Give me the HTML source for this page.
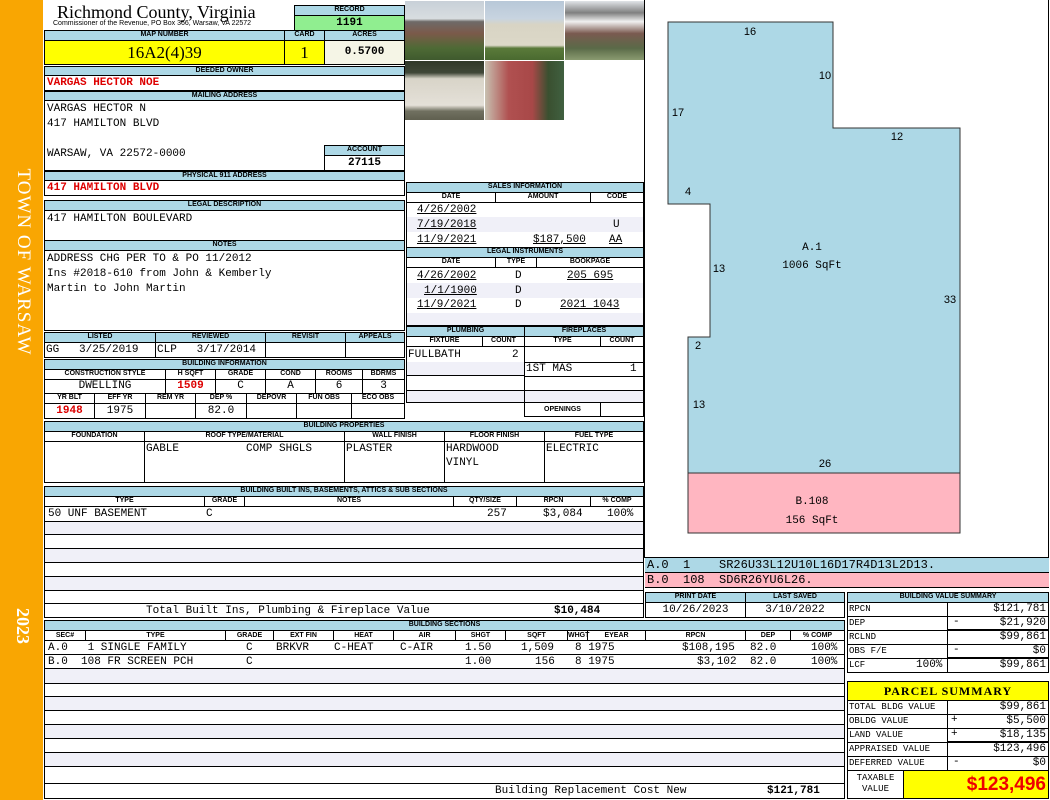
<!DOCTYPE html><html><head><style>
*{margin:0;padding:0;box-sizing:border-box}
body{width:1050px;height:800px;position:relative;background:#fff;overflow:hidden;font-family:"Liberation Mono",monospace;font-size:11px;color:#000}
div{position:absolute}
.h{background:#add8e6;border:1px solid #000;font:bold 7px "Liberation Sans",sans-serif;text-align:center;line-height:8px;white-space:nowrap;overflow:hidden}
.c{border:1px solid #000;white-space:nowrap;overflow:hidden}
.t{white-space:nowrap;line-height:14px}
.r{color:#d00;font-weight:bold}
.ctr{text-align:center}.rt{text-align:right}
.ln{border-top:1px solid #000;height:0}
.alt{background:#f0f0f8}
</style></head><body>
<div style="left:0;top:0;width:43px;height:800px;background:#f9a602"></div>
<div style="left:-90px;top:250px;width:224px;height:24px;transform:rotate(90deg);color:#fff;font:19px 'Liberation Serif',serif;text-align:center;letter-spacing:1px">TOWN OF WARSAW</div>
<div style="left:-10px;top:615px;width:64px;height:22px;transform:rotate(90deg);color:#fff;font:bold 18px 'Liberation Serif',serif;text-align:center">2023</div>

<div style="left:57px;top:2px;font:18px 'Liberation Serif',serif;line-height:20px">Richmond County, Virginia</div>
<div style="left:53px;top:20px;font:7px 'Liberation Sans',sans-serif">Commissioner of the Revenue, PO Box 366, Warsaw, VA 22572</div>
<div class="h" style="left:294px;top:5px;width:111px;height:11px">RECORD</div>
<div class="c ctr" style="left:294px;top:15px;width:111px;height:16px;background:#90ee90;font-weight:bold;line-height:14px">1191</div>

<div class="h" style="left:44px;top:30px;width:241px;height:11px">MAP NUMBER</div>
<div class="h" style="left:284px;top:30px;width:41px;height:11px">CARD</div>
<div class="h" style="left:324px;top:30px;width:81px;height:11px">ACRES</div>
<div class="c ctr" style="left:44px;top:40px;width:241px;height:25px;background:#ff0;font:17px 'Liberation Serif',serif;line-height:24px">16A2(4)39</div>
<div class="c ctr" style="left:284px;top:40px;width:41px;height:25px;background:#ff0;font:17px 'Liberation Serif',serif;line-height:24px">1</div>
<div class="c ctr" style="left:324px;top:40px;width:81px;height:25px;background:#f5f5e6;font-weight:bold;line-height:23px">0.5700</div>

<div class="h" style="left:44px;top:66px;width:361px;height:10px">DEEDED OWNER</div>
<div class="c" style="left:44px;top:75px;width:361px;height:16px"><div class="t r" style="left:2px;top:0">VARGAS HECTOR NOE</div></div>
<div class="h" style="left:44px;top:91px;width:361px;height:10px">MAILING ADDRESS</div>
<div class="c" style="left:44px;top:100px;width:361px;height:71px">
<div class="t" style="left:2px;top:1px">VARGAS HECTOR N</div>
<div class="t" style="left:2px;top:16px">417 HAMILTON BLVD</div>
<div class="t" style="left:2px;top:46px">WARSAW, VA 22572-0000</div></div>
<div class="h" style="left:324px;top:145px;width:81px;height:11px">ACCOUNT</div>
<div class="c ctr" style="left:324px;top:155px;width:81px;height:16px;font-weight:bold;line-height:14px">27115</div>
<div class="h" style="left:44px;top:171px;width:361px;height:10px">PHYSICAL 911 ADDRESS</div>
<div class="c" style="left:44px;top:180px;width:361px;height:16px"><div class="t r" style="left:2px;top:0">417 HAMILTON BLVD</div></div>

<div class="h" style="left:44px;top:200px;width:361px;height:11px">LEGAL DESCRIPTION</div>
<div class="c" style="left:44px;top:210px;width:361px;height:31px"><div class="t" style="left:2px;top:1px">417 HAMILTON BOULEVARD</div></div>
<div class="h" style="left:44px;top:240px;width:361px;height:11px">NOTES</div>
<div class="c" style="left:44px;top:250px;width:361px;height:81px">
<div class="t" style="left:2px;top:1px">ADDRESS CHG PER TO &amp; PO 11/2012</div>
<div class="t" style="left:2px;top:16px">Ins #2018-610 from John &amp; Kemberly</div>
<div class="t" style="left:2px;top:31px">Martin to John Martin</div></div>

<div class="h" style="left:44px;top:332px;width:112px;height:11px">LISTED</div>
<div class="h" style="left:155px;top:332px;width:111px;height:11px">REVIEWED</div>
<div class="h" style="left:265px;top:332px;width:81px;height:11px">REVISIT</div>
<div class="h" style="left:345px;top:332px;width:60px;height:11px">APPEALS</div>
<div class="c" style="left:44px;top:342px;width:112px;height:16px"><div class="t" style="left:1px;top:0">GG &nbsp;&nbsp;3/25/2019</div></div>
<div class="c" style="left:155px;top:342px;width:111px;height:16px"><div class="t" style="left:1px;top:0">CLP &nbsp;&nbsp;3/17/2014</div></div>
<div class="c" style="left:265px;top:342px;width:81px;height:16px"></div>
<div class="c" style="left:345px;top:342px;width:60px;height:16px"></div>

<div class="h" style="left:44px;top:359px;width:361px;height:11px">BUILDING INFORMATION</div>
<div class="h" style="left:44px;top:369px;width:122px;height:11px;background:#fff">CONSTRUCTION STYLE</div>
<div class="h" style="left:165px;top:369px;width:51px;height:11px;background:#fff">H SQFT</div>
<div class="h" style="left:215px;top:369px;width:51px;height:11px;background:#fff">GRADE</div>
<div class="h" style="left:265px;top:369px;width:51px;height:11px;background:#fff">COND</div>
<div class="h" style="left:315px;top:369px;width:48px;height:11px;background:#fff">ROOMS</div>
<div class="h" style="left:362px;top:369px;width:43px;height:11px;background:#fff">BDRMS</div>
<div class="c ctr" style="left:44px;top:379px;width:122px;height:15px;line-height:13px">DWELLING</div>
<div class="c ctr r" style="left:165px;top:379px;width:51px;height:15px;line-height:13px">1509</div>
<div class="c ctr" style="left:215px;top:379px;width:51px;height:15px;line-height:13px">C</div>
<div class="c ctr" style="left:265px;top:379px;width:51px;height:15px;line-height:13px">A</div>
<div class="c ctr" style="left:315px;top:379px;width:48px;height:15px;line-height:13px">6</div>
<div class="c ctr" style="left:362px;top:379px;width:43px;height:15px;line-height:13px">3</div>
<div class="h" style="left:44px;top:393px;width:51px;height:11px;background:#fff">YR BLT</div>
<div class="h" style="left:94px;top:393px;width:52px;height:11px;background:#fff">EFF YR</div>
<div class="h" style="left:145px;top:393px;width:51px;height:11px;background:#fff">REM YR</div>
<div class="h" style="left:195px;top:393px;width:52px;height:11px;background:#fff">DEP %</div>
<div class="h" style="left:246px;top:393px;width:51px;height:11px;background:#fff">DEPOVR</div>
<div class="h" style="left:296px;top:393px;width:56px;height:11px;background:#fff">FUN OBS</div>
<div class="h" style="left:351px;top:393px;width:54px;height:11px;background:#fff">ECO OBS</div>
<div class="c ctr r" style="left:44px;top:403px;width:51px;height:16px;line-height:14px">1948</div>
<div class="c ctr" style="left:94px;top:403px;width:52px;height:16px;line-height:14px">1975</div>
<div class="c" style="left:145px;top:403px;width:51px;height:16px"></div>
<div class="c ctr" style="left:195px;top:403px;width:52px;height:16px;line-height:14px">82.0</div>
<div class="c" style="left:246px;top:403px;width:51px;height:16px"></div>
<div class="c" style="left:296px;top:403px;width:56px;height:16px"></div>
<div class="c" style="left:351px;top:403px;width:54px;height:16px"></div>

<!-- photos -->
<div style="left:405px;top:1px;width:79px;height:59px;background:linear-gradient(#c8d0d8 0,#d8dde0 30%,#6e6a68 35%,#7b5a4a 55%,#4e6a35 80%,#3f5a2e 100%)"></div>
<div style="left:485px;top:1px;width:79px;height:59px;background:linear-gradient(#b8c8d8 0,#c8d4e0 30%,#d8d4c4 40%,#dcd8c8 75%,#5a7a3a 80%,#4a6a30 100%)"></div>
<div style="left:565px;top:1px;width:79px;height:59px;background:linear-gradient(#e0e4e8 0,#808080 20%,#f0f0f0 35%,#7a5a50 55%,#5a6a48 80%,#8a9a70 100%)"></div>
<div style="left:405px;top:61px;width:79px;height:59px;background:linear-gradient(#303828 0,#404838 20%,#d8d4c8 30%,#e4e0d8 75%,#707060 85%,#606050 100%)"></div>
<div style="left:485px;top:61px;width:79px;height:59px;background:linear-gradient(90deg,#c8c0b0 0,#b05050 30%,#a84848 60%,#3a5030 80%,#406040 100%)"></div>

<!-- sales -->
<div class="h" style="left:406px;top:182px;width:238px;height:11px">SALES INFORMATION</div>
<div class="h" style="left:406px;top:192px;width:90px;height:11px;background:#fff">DATE</div>
<div class="h" style="left:495px;top:192px;width:96px;height:11px;background:#fff">AMOUNT</div>
<div class="h" style="left:590px;top:192px;width:54px;height:11px;background:#fff">CODE</div>
<div class="c" style="left:406px;top:202px;width:238px;height:46px">
<div class="t" style="left:10px;top:0;text-decoration:underline">4/26/2002</div>
<div class="t alt" style="left:0;top:14px;width:236px;height:15px"></div>
<div class="t" style="left:10px;top:15px;text-decoration:underline">7/19/2018</div><div class="t" style="left:206px;top:15px">U</div>
<div class="t" style="left:10px;top:30px;text-decoration:underline">11/9/2021</div><div class="t" style="left:126px;top:30px;text-decoration:underline">$187,500</div><div class="t" style="left:202px;top:30px;text-decoration:underline">AA</div></div>
<div class="h" style="left:406px;top:247px;width:238px;height:11px">LEGAL INSTRUMENTS</div>
<div class="h" style="left:406px;top:257px;width:90px;height:11px;background:#fff">DATE</div>
<div class="h" style="left:495px;top:257px;width:42px;height:11px;background:#fff">TYPE</div>
<div class="h" style="left:536px;top:257px;width:108px;height:11px;background:#fff">BOOKPAGE</div>
<div class="c" style="left:406px;top:267px;width:238px;height:59px">
<div class="alt" style="left:0;top:15px;width:236px;height:15px"></div>
<div class="alt" style="left:0;top:45px;width:236px;height:13px"></div>
<div class="t" style="left:10px;top:1px;text-decoration:underline">4/26/2002</div><div class="t" style="left:108px;top:1px">D</div><div class="t" style="left:160px;top:1px;text-decoration:underline">205 695</div>
<div class="t" style="left:17px;top:16px;text-decoration:underline">1/1/1900</div><div class="t" style="left:108px;top:16px">D</div>
<div class="t" style="left:10px;top:30px;text-decoration:underline">11/9/2021</div><div class="t" style="left:108px;top:30px">D</div><div class="t" style="left:153px;top:30px;text-decoration:underline">2021 1043</div></div>

<div class="h" style="left:406px;top:326px;width:119px;height:11px">PLUMBING</div>
<div class="h" style="left:524px;top:326px;width:120px;height:11px">FIREPLACES</div>
<div class="h" style="left:406px;top:336px;width:77px;height:11px;background:#fff">FIXTURE</div>
<div class="h" style="left:482px;top:336px;width:43px;height:11px;background:#fff">COUNT</div>
<div class="h" style="left:524px;top:336px;width:77px;height:11px;background:#fff">TYPE</div>
<div class="h" style="left:600px;top:336px;width:44px;height:11px;background:#fff">COUNT</div>
<div class="c" style="left:406px;top:346px;width:119px;height:57px">
<div class="alt" style="left:0;top:15px;width:117px;height:14px;border-bottom:1px solid #000"></div>
<div class="alt" style="left:0;top:43px;width:117px;height:14px;border-top:1px solid #000"></div>
<div class="t" style="left:1px;top:1px">FULLBATH</div><div class="t" style="left:105px;top:1px">2</div></div>
<div class="c" style="left:524px;top:346px;width:120px;height:57px">
<div class="ln" style="left:0;top:15px;width:118px"></div>
<div class="ln" style="left:0;top:29px;width:118px"></div>
<div class="alt" style="left:0;top:43px;width:118px;height:13px;border-top:1px solid #000"></div>
<div class="t" style="left:1px;top:15px">1ST MAS</div><div class="t" style="left:105px;top:15px">1</div></div>
<div class="c" style="left:524px;top:402px;width:77px;height:15px;font:bold 7px 'Liberation Sans',sans-serif;text-align:center;line-height:13px">OPENINGS</div>
<div class="c" style="left:600px;top:402px;width:44px;height:15px"></div>

<!-- building properties -->
<div class="h" style="left:44px;top:421px;width:600px;height:11px">BUILDING PROPERTIES</div>
<div class="h" style="left:44px;top:431px;width:101px;height:11px;background:#fff">FOUNDATION</div>
<div class="h" style="left:144px;top:431px;width:201px;height:11px;background:#fff">ROOF TYPE/MATERIAL</div>
<div class="h" style="left:344px;top:431px;width:101px;height:11px;background:#fff">WALL FINISH</div>
<div class="h" style="left:444px;top:431px;width:101px;height:11px;background:#fff">FLOOR FINISH</div>
<div class="h" style="left:544px;top:431px;width:100px;height:11px;background:#fff">FUEL TYPE</div>
<div class="c" style="left:44px;top:441px;width:101px;height:42px"></div>
<div class="c" style="left:144px;top:441px;width:201px;height:42px"><div class="t" style="left:1px;top:0">GABLE</div><div class="t" style="left:101px;top:0">COMP SHGLS</div></div>
<div class="c" style="left:344px;top:441px;width:101px;height:42px"><div class="t" style="left:1px;top:0">PLASTER</div></div>
<div class="c" style="left:444px;top:441px;width:101px;height:42px"><div class="t" style="left:1px;top:0">HARDWOOD</div><div class="t" style="left:1px;top:14px">VINYL</div></div>
<div class="c" style="left:544px;top:441px;width:100px;height:42px"><div class="t" style="left:1px;top:0">ELECTRIC</div></div>

<!-- built ins -->
<div class="h" style="left:44px;top:486px;width:600px;height:11px">BUILDING BUILT INS, BASEMENTS, ATTICS &amp; SUB SECTIONS</div>
<div class="h" style="left:44px;top:496px;width:161px;height:11px;background:#fff">TYPE</div>
<div class="h" style="left:204px;top:496px;width:41px;height:11px;background:#fff">GRADE</div>
<div class="h" style="left:244px;top:496px;width:210px;height:11px;background:#fff">NOTES</div>
<div class="h" style="left:453px;top:496px;width:64px;height:11px;background:#fff">QTY/SIZE</div>
<div class="h" style="left:516px;top:496px;width:75px;height:11px;background:#fff">RPCN</div>
<div class="h" style="left:590px;top:496px;width:54px;height:11px;background:#fff">% COMP</div>
<div class="c" style="left:44px;top:506px;width:600px;height:112px">
<div class="t" style="left:3px;top:0">50 UNF BASEMENT</div><div class="t" style="left:161px;top:0">C</div>
<div class="t" style="left:442px;top:0">257</div><div class="t" style="left:498px;top:0">$3,084</div><div class="t" style="left:562px;top:0">100%</div>
<div class="alt" style="left:0;top:14px;width:598px;height:13px;border-top:1px solid #000"></div>
<div class="ln" style="left:0;top:27px;width:598px"></div>
<div class="alt" style="left:0;top:41px;width:598px;height:14px;border-top:1px solid #000"></div>
<div class="ln" style="left:0;top:55px;width:598px"></div>
<div class="alt" style="left:0;top:69px;width:598px;height:14px;border-top:1px solid #000"></div>
<div class="ln" style="left:0;top:83px;width:598px"></div>
<div class="ln" style="left:0;top:96px;width:598px"></div>
<div class="t" style="left:101px;top:97px">Total Built Ins, Plumbing &amp; Fireplace Value</div>
<div class="t" style="left:509px;top:97px;font-weight:bold">$10,484</div></div>

<!-- print date -->
<div class="h" style="left:645px;top:592px;width:101px;height:11px">PRINT DATE</div>
<div class="h" style="left:745px;top:592px;width:100px;height:11px">LAST SAVED</div>
<div class="c ctr" style="left:645px;top:602px;width:101px;height:16px;line-height:14px">10/26/2023</div>
<div class="c ctr" style="left:745px;top:602px;width:100px;height:16px;line-height:14px">3/10/2022</div>

<!-- building sections -->
<div class="h" style="left:44px;top:620px;width:801px;height:11px">BUILDING SECTIONS</div>
<div style="left:44px;top:630px;width:801px;height:11px;border:1px solid #000;font:bold 7px 'Liberation Sans',sans-serif;line-height:9px">
<div style="left:0;width:41px;text-align:center;border-right:1px solid #000;height:9px">SEC#</div>
<div style="left:41px;width:140px;text-align:center;border-right:1px solid #000;height:9px">TYPE</div>
<div style="left:181px;width:48px;text-align:center;border-right:1px solid #000;height:9px">GRADE</div>
<div style="left:229px;width:60px;text-align:center;border-right:1px solid #000;height:9px">EXT FIN</div>
<div style="left:289px;width:60px;text-align:center;border-right:1px solid #000;height:9px">HEAT</div>
<div style="left:349px;width:62px;text-align:center;border-right:1px solid #000;height:9px">AIR</div>
<div style="left:411px;width:50px;text-align:center;border-right:1px solid #000;height:9px">SHGT</div>
<div style="left:461px;width:62px;text-align:center;border-right:1px solid #000;height:9px">SQFT</div>
<div style="left:523px;width:20px;text-align:center;border-right:1px solid #000;height:9px">WHGT</div>
<div style="left:543px;width:58px;text-align:center;border-right:1px solid #000;height:9px">EYEAR</div>
<div style="left:601px;width:100px;text-align:center;border-right:1px solid #000;height:9px">RPCN</div>
<div style="left:701px;width:45px;text-align:center;border-right:1px solid #000;height:9px">DEP</div>
<div style="left:746px;width:53px;text-align:center">% COMP</div></div>
<div class="c" style="left:44px;top:640px;width:801px;height:159px">
<div class="t" style="left:3px;top:0">A.0 &nbsp;&nbsp;1 SINGLE FAMILY</div><div class="t" style="left:201px;top:0">C</div><div class="t" style="left:231px;top:0">BRKVR</div><div class="t" style="left:289px;top:0">C-HEAT</div><div class="t" style="left:355px;top:0">C-AIR</div>
<div class="t" style="left:420px;top:0">1.50</div><div class="t" style="left:476px;top:0">1,509</div><div class="t" style="left:530px;top:0">8 1975</div><div class="t" style="left:637px;top:0">$108,195</div><div class="t" style="left:705px;top:0">82.0</div><div class="t" style="left:766px;top:0">100%</div>
<div class="ln" style="left:0;top:13px;width:799px"></div>
<div class="t" style="left:3px;top:14px">B.0 &nbsp;108 FR SCREEN PCH</div><div class="t" style="left:201px;top:14px">C</div>
<div class="t" style="left:420px;top:14px">1.00</div><div class="t" style="left:490px;top:14px">156</div><div class="t" style="left:530px;top:14px">8 1975</div><div class="t" style="left:652px;top:14px">$3,102</div><div class="t" style="left:705px;top:14px">82.0</div><div class="t" style="left:766px;top:14px">100%</div>
<div class="alt" style="left:0;top:27px;width:799px;height:15px;border-top:1px solid #000"></div>
<div class="ln" style="left:0;top:42px;width:799px"></div>
<div class="alt" style="left:0;top:55px;width:799px;height:14px;border-top:1px solid #000"></div>
<div class="ln" style="left:0;top:69px;width:799px"></div>
<div class="alt" style="left:0;top:83px;width:799px;height:14px;border-top:1px solid #000"></div>
<div class="ln" style="left:0;top:97px;width:799px"></div>
<div class="alt" style="left:0;top:111px;width:799px;height:14px;border-top:1px solid #000"></div>
<div class="ln" style="left:0;top:125px;width:799px"></div>
<div class="ln" style="left:0;top:142px;width:799px"></div>
<div class="t" style="left:450px;top:143px">Building Replacement Cost New</div>
<div class="t" style="left:722px;top:143px;font-weight:bold">$121,781</div></div>

<!-- sketch -->
<div style="left:644px;top:0;width:405px;height:558px;border-left:1px solid #000;border-right:1px solid #000;border-bottom:1px solid #000"></div>
<svg style="position:absolute;left:0;top:0" width="1050" height="560">
<polygon points="668,22 833,22 833,128 960,128 960,473 688,473 688,337 710,337 710,204 668,204" fill="#add8e6" stroke="#333" stroke-width="1"/>
<rect x="688" y="473" width="272" height="60" fill="#ffb6c1" stroke="#333"/>
<g font-family="Liberation Sans,sans-serif" font-size="11" text-anchor="middle">
<text x="750" y="35">16</text><text x="825" y="79">10</text><text x="678" y="116">17</text><text x="897" y="140">12</text>
<text x="688" y="195">4</text><text x="719" y="272">13</text><text x="950" y="303">33</text><text x="698" y="349">2</text>
<text x="699" y="408">13</text><text x="825" y="467">26</text></g>
<g font-family="Liberation Mono,monospace" font-size="11" text-anchor="middle">
<text x="812" y="250">A.1</text><text x="812" y="268">1006 SqFt</text>
<text x="812" y="504">B.108</text><text x="812" y="523">156 SqFt</text></g>
</svg>
<div style="left:645px;top:558px;width:404px;height:15px;background:#add8e6;border-bottom:1px solid #000"><div class="t" style="left:2px;top:0;font-size:12px">A.0 &nbsp;1 &nbsp;&nbsp;&nbsp;SR26U33L12U10L16D17R4D13L2D13.</div></div>
<div style="left:645px;top:573px;width:404px;height:15px;background:#ffb6c1;border-bottom:1px solid #000"><div class="t" style="left:2px;top:0;font-size:12px">B.0 &nbsp;108 &nbsp;SD6R26YU6L26.</div></div>

<!-- value summary -->
<div class="h" style="left:847px;top:592px;width:202px;height:11px">BUILDING VALUE SUMMARY</div>
<div style="left:847px;top:602px;width:202px;height:71px;border:1px solid #000;font-size:9px">
<div class="c" style="left:-1px;top:-1px;width:101px;height:15px;line-height:13px;padding-left:1px">RPCN</div><div class="c rt" style="left:99px;top:-1px;width:102px;height:15px;line-height:13px;font-size:11px;padding-right:2px">$121,781</div>
<div class="c" style="left:-1px;top:13px;width:101px;height:15px;line-height:13px;padding-left:1px">DEP</div><div class="c rt" style="left:99px;top:13px;width:102px;height:15px;line-height:13px;font-size:11px;padding-right:2px;border-bottom:2px solid #000">$21,920</div><div class="t" style="left:105px;top:13px;line-height:13px;font-size:11px">-</div>
<div class="c" style="left:-1px;top:27px;width:101px;height:15px;line-height:13px;padding-left:1px">RCLND</div><div class="c rt" style="left:99px;top:27px;width:102px;height:15px;line-height:13px;font-size:11px;padding-right:2px">$99,861</div>
<div class="c" style="left:-1px;top:41px;width:101px;height:15px;line-height:13px;padding-left:1px">OBS F/E</div><div class="c rt" style="left:99px;top:41px;width:102px;height:15px;line-height:13px;font-size:11px;padding-right:2px;border-bottom:2px solid #000">$0</div><div class="t" style="left:105px;top:41px;line-height:13px;font-size:11px">-</div>
<div class="c" style="left:-1px;top:55px;width:101px;height:15px;line-height:13px;padding-left:1px">LCF<span style="position:absolute;left:68px;font-size:11px">100%</span></div><div class="c rt" style="left:99px;top:55px;width:102px;height:15px;line-height:13px;font-size:11px;padding-right:2px">$99,861</div>
</div>

<!-- parcel summary -->
<div class="c ctr" style="left:847px;top:681px;width:202px;height:20px;background:#ff0;font:bold 12px 'Liberation Serif',serif;line-height:18px;letter-spacing:1px">PARCEL SUMMARY</div>
<div style="left:847px;top:700px;width:202px;height:99px;border:1px solid #000;font-size:9px">
<div class="c" style="left:-1px;top:-1px;width:57px;height:15px;line-height:13px;padding-left:1px;width:57px;border:none"></div>
<div class="c" style="left:-1px;top:-1px;width:57px;height:15px;border:none"></div>
<div class="c" style="left:-1px;top:-1px;width:57px;height:15px;border:none"></div>
<div class="c" style="left:-1px;top:-1px;width:57px;height:15px;border:none"></div>
<div class="c" style="left:-1px;top:-1px;width:101px;height:15px;line-height:13px;padding-left:1px">TOTAL BLDG VALUE</div><div class="c rt" style="left:99px;top:-1px;width:102px;height:15px;line-height:13px;font-size:11px;padding-right:2px">$99,861</div>
<div class="c" style="left:-1px;top:13px;width:101px;height:15px;line-height:13px;padding-left:1px">OBLDG VALUE</div><div class="c rt" style="left:99px;top:13px;width:102px;height:15px;line-height:13px;font-size:11px;padding-right:2px">$5,500</div><div class="t" style="left:103px;top:13px;line-height:13px;font-size:11px">+</div>
<div class="c" style="left:-1px;top:27px;width:101px;height:15px;line-height:13px;padding-left:1px">LAND VALUE</div><div class="c rt" style="left:99px;top:27px;width:102px;height:15px;line-height:13px;font-size:11px;padding-right:2px;border-bottom:2px solid #000">$18,135</div><div class="t" style="left:103px;top:27px;line-height:13px;font-size:11px">+</div>
<div class="c" style="left:-1px;top:41px;width:101px;height:15px;line-height:13px;padding-left:1px">APPRAISED VALUE</div><div class="c rt" style="left:99px;top:41px;width:102px;height:15px;line-height:13px;font-size:11px;padding-right:2px">$123,496</div>
<div class="c" style="left:-1px;top:55px;width:101px;height:15px;line-height:13px;padding-left:1px">DEFERRED VALUE</div><div class="c rt" style="left:99px;top:55px;width:102px;height:15px;line-height:13px;font-size:11px;padding-right:2px">$0</div><div class="t" style="left:105px;top:55px;line-height:13px;font-size:11px">-</div>
<div class="c" style="left:-1px;top:69px;width:57px;height:29px;line-height:11px;text-align:center;padding-top:2px">TAXABLE<br>VALUE</div>
<div class="c rt" style="left:55px;top:69px;width:146px;height:29px;background:#ff0;color:#e00;font:bold 19px 'Liberation Sans',sans-serif;line-height:27px;padding-right:2px">$123,496</div>
</div>
</body></html>
